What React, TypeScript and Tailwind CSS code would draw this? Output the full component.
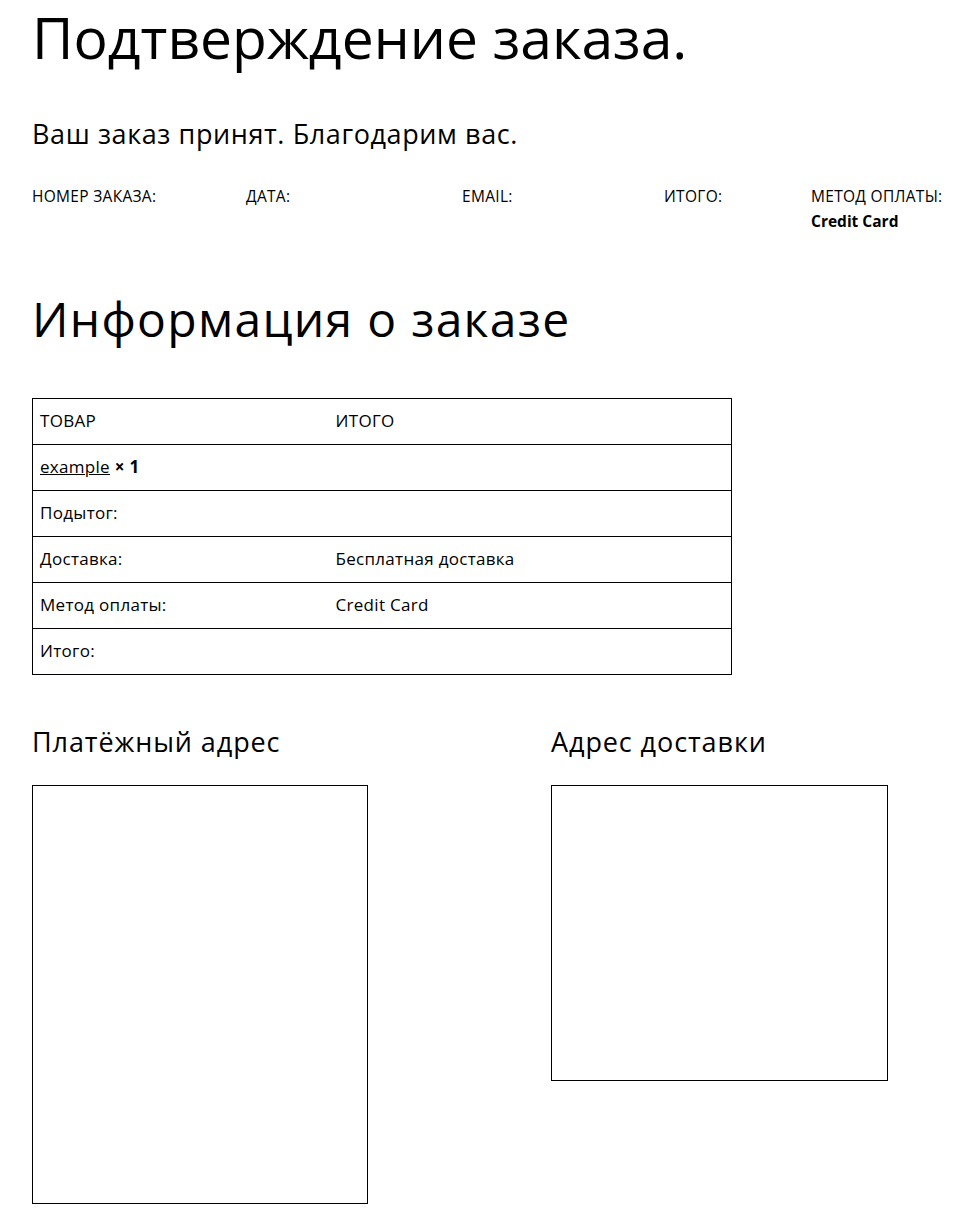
import React from "react";

const font = { fontFamily: "'Open Sans', 'Noto Sans', sans-serif" };

export default function App() {
  const rows: [React.ReactNode, React.ReactNode][] = [
    ["Подытог:", ""],
    ["Доставка:", "Бесплатная доставка"],
    ["Метод оплаты:", "Credit Card"],
    ["Итого:", ""],
  ];
  return (
    <div className="bg-white text-black px-[32px] pb-[25px]" style={font}>
      <h1 className="text-[57px] leading-[1.2] pt-[3px] font-normal whitespace-nowrap">Подтверждение заказа.</h1>
      <p className="text-[27px] leading-[1.2] mt-[47px] tracking-[0.6px] whitespace-nowrap">Ваш заказ принят. Благодарим вас.</p>
      <ul className="flex mt-[33px] text-[15.5px] leading-[25px] tracking-[0.3px] uppercase whitespace-nowrap">
        <li className="w-[214px] shrink-0">Номер заказа:</li>
        <li className="w-[216px] shrink-0">Дата:</li>
        <li className="w-[202px] shrink-0">Email:</li>
        <li className="w-[147px] shrink-0">Итого:</li>
        <li className="shrink-0">
          Метод оплаты:
          <br />
          <strong className="font-bold normal-case tracking-normal">Credit Card</strong>
        </li>
      </ul>
      <h2 className="text-[48px] leading-[1.2] mt-[56px] tracking-[1.3px] font-normal whitespace-nowrap">Информация о заказе</h2>
      <table className="mt-[51px] w-[700px] border-collapse border border-black text-[17px] tracking-[0.3px]">
        <thead>
          <tr className="border-b border-black">
            <th className="w-[295px] text-left font-normal uppercase pl-[7px] py-[10px] leading-[24.9px]">Товар</th>
            <th className="text-left font-normal uppercase pl-[8px] py-[10px] leading-[24.9px]">Итого</th>
          </tr>
        </thead>
        <tbody>
          <tr className="border-b border-black">
            <td className="pl-[7px] py-[10px] leading-[24.9px]">
              <a className="underline">example</a> <strong className="font-bold">× 1</strong>
            </td>
            <td className="pl-[8px] py-[10px] leading-[24.9px]"></td>
          </tr>
          {rows.map(([a, b], i) => (
            <tr key={i} className="border-b border-black">
              <th className="text-left font-normal pl-[7px] py-[10px] leading-[24.9px]">{a}</th>
              <td className="pl-[8px] py-[10px] leading-[24.9px]">{b}</td>
            </tr>
          ))}
        </tbody>
      </table>
      <div className="grid grid-cols-[519px_1fr] mt-[51px]">
        <div>
          <h3 className="text-[27px] leading-[1.2] tracking-[0.9px] font-normal whitespace-nowrap">Платёжный адрес</h3>
          <div className="mt-[27px] w-[336px] h-[419px] border border-black"></div>
        </div>
        <div>
          <h3 className="text-[27px] leading-[1.2] tracking-[0.9px] font-normal whitespace-nowrap">Адрес доставки</h3>
          <div className="mt-[27px] w-[337px] h-[296px] border border-black"></div>
        </div>
      </div>
    </div>
  );
}
